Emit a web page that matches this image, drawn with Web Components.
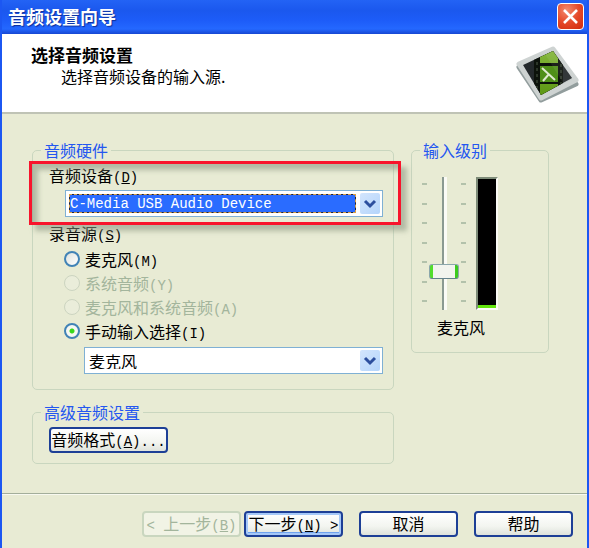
<!DOCTYPE html>
<html lang="zh-CN">
<head>
<meta charset="utf-8">
<title>音频设置向导</title>
<style>
    html {
        background-color: #e8ebd4;
    }

    body {
        margin: 0;
        color: #000;
        font: 16px/16px "Noto Sans CJK SC", sans-serif;
        --line: #c9d6bf;
        --disabled: #a3b59c;
        --caption: #2457f0;
        --mono: "Liberation Mono", "Noto Sans CJK SC", monospace;
    }

    .panels {
        display: grid;
        grid-template-columns: 1fr 138px;
        gap: 17px;
        align-items: start;
        padding: 28px 38px 29px 30px;
    }

    .left {
        display: grid;
        gap: 14px;
    }

    .hardware {
        display: block;
        padding: 9px 10px 15px 16px;
    }

    .format {
        display: block;
        padding: 7px 16px 10px;
    }

    .device {
        position: relative;
    }

    .sources {
        margin-top: 8px;
    }

    .manual {
        margin: 4px 0 0 35px;
    }
</style>
</head>
<body>
<wizard-window caption="音频设置向导">
    <wizard-header slot="header" heading="选择音频设置">选择音频设备的输入源.</wizard-header>
    <div class="panels">
        <div class="left">
            <group-box caption="音频硬件">
                <div class="hardware">
                    <div class="device">
                        <combo-box label="音频设备|(_D)" value="C-Media USB Audio Device" active></combo-box>
                        <red-callout></red-callout>
                    </div>
                    <radio-list class="sources" label="录音源|(_S)"></radio-list>
                    <combo-box class="manual" name="手动输入" value="麦克风"></combo-box>
                </div>
            </group-box>
            <group-box caption="高级音频设置">
                <div class="format">
                    <push-button text="音频格式|(_A)..." size="wide"></push-button>
                </div>
            </group-box>
        </div>
        <group-box caption="输入级别">
            <input-level label="麦克风"></input-level>
        </group-box>
    </div>
    <wizard-footer slot="footer">
        <push-button slot="steps" text="|&lt; |上一步|(_B)" disabled></push-button>
        <push-button slot="steps" text="下一步|(_N) &gt;" default></push-button>
        <push-button text="取消"></push-button>
        <push-button text="帮助"></push-button>
    </wizard-footer>
</wizard-window>

<script>
// parts between "|" alternate between Chinese and monospaced text, "_" marks the access key
function caption(text) {
    return text.split("|").map((part, i) => {
        const safe = part.replace(/</g, "&lt;").replace(/>/g, "&gt;").replace(/_(\w)/, "<u>$1</u>");
        return i % 2 ? `<span class="mono">${safe}</span>` : safe;
    }).join("");
}

const monoStyle = `
    .mono {
        font-family: var(--mono);
        font-size: 14px;
        line-height: 0;
        white-space: pre;
    }
`;

class WizardWindow extends HTMLElement {
    constructor() {
        super();
        this.shadowDOM = this.attachShadow({mode:"open"});
    }

    connectedCallback() {
        this.shadowDOM.innerHTML = `
        <style>
        :host {
            display: block;
            border: solid #1c57f2;
            border-width: 0 2px;
        }

        .title {
            display: flex;
            justify-content: space-between;
            align-items: center;
            height: 34px;
            box-sizing: border-box;
            padding: 0 3px 2px 6px;
            background: linear-gradient(#2363f5, #1b58ee 30%, #1d5cf8 60%, #2468ff 85%, #1747d2);
        }

        h1 {
            margin: 0;
            font-size: 18px;
            line-height: 20px;
            color: white;
            text-shadow: 1px 1px 1px #0c2f9a;
        }

        button {
            width: 27px;
            height: 27px;
            padding: 0;
            border: 1px solid white;
            border-radius: 4px;
            background: radial-gradient(circle at 35% 25%, #f38b70, #e5492a 50%, #cf2a0c);
        }

        svg {
            display: block;
            margin: auto;
        }
        </style>
        <div class="title">
            <h1>${this.getAttribute("caption")}</h1>
            <button type="button" aria-label="关闭">
                <svg width="17" height="17" viewBox="0 0 17 17"><path d="M2 2L15 15M15 2L2 15" stroke="#fff" stroke-width="2.6"/></svg>
            </button>
        </div>
        <slot name="header"></slot>
        <slot></slot>
        <slot name="footer"></slot>`;
    }
}

class WizardHeader extends HTMLElement {
    constructor() {
        super();
        this.shadowDOM = this.attachShadow({mode:"open"});
    }

    connectedCallback() {
        this.shadowDOM.innerHTML = `
        <style>
        :host {
            display: flex;
            justify-content: space-between;
            align-items: flex-start;
            padding: 12px 6px 8px 29px;
            background-color: white;
            border-bottom: 2px solid #bfc3b5;
        }

        h2 {
            margin: 0 0 2px;
            font-size: 17px;
            line-height: 18px;
        }

        p {
            margin: 0 0 0 30px;
            line-height: 20px;
        }
        </style>
        <div>
            <h2>${this.getAttribute("heading")}</h2>
            <p><slot></slot></p>
        </div>
        <svg width="66" height="58" viewBox="0 0 66 58">
            <defs>
                <linearGradient id="rim" x1="0" y1="0" x2="1" y2="1">
                    <stop offset="0" stop-color="#e0e4e3"/>
                    <stop offset=".6" stop-color="#cdd2d1"/>
                    <stop offset="1" stop-color="#b9c0bf"/>
                </linearGradient>
                <linearGradient id="leaf" x1="0" y1="0" x2="0" y2="1">
                    <stop offset="0" stop-color="#86b83c"/>
                    <stop offset="1" stop-color="#5a9612"/>
                </linearGradient>
                <clipPath id="face"><path d="M8 19L38 5L57 32L26 49Z"/></clipPath>
            </defs>
            <path d="M4 21L26 54L61 38" fill="none" stroke="#929d9d" stroke-width="5" stroke-linejoin="round" stroke-linecap="round"/>
            <path d="M4 18L38 3L61 34L26 52Z" fill="url(#rim)" stroke="#ced3d2" stroke-width="5" stroke-linejoin="round"/>
            <g clip-path="url(#face)">
                <path d="M0 0H66V58H0Z" fill="#24292c"/>
                <path d="M19 0H48V58H19Z" fill="#0c120b"/>
                <path d="M25 2H43V17H25ZM25 38H43V52H25Z" fill="url(#leaf)"/>
                <path d="M25 20H43V36H25Z" fill="#4f8f18"/>
                <path d="M21 16h2v3h-2zM21 22h2v3h-2zM21 28h2v3h-2zM21 34h2v3h-2zM21 40h2v3h-2zM45 12h2v3h-2zM45 18h2v3h-2zM45 24h2v3h-2zM45 30h2v3h-2zM45 36h2v3h-2z" fill="#2b3528"/>
                <path d="M27 22L40 34M34 28L28 35" stroke="#dfe9cf" stroke-width="2"/>
                <path d="M38 5L57 32L48 37L30 8Z" fill="#fff" opacity=".07"/>
            </g>
        </svg>`;
    }
}

class GroupBox extends HTMLElement {
    constructor() {
        super();
        this.shadowDOM = this.attachShadow({mode:"open"});
    }

    connectedCallback() {
        this.shadowDOM.innerHTML = `
        <style>
        :host {
            display: block;
        }

        fieldset {
            margin: 0;
            padding: 0;
            min-width: 0;
            border: 1px solid var(--line);
            border-radius: 5px;
        }

        legend {
            margin-left: 8px;
            padding: 0 3px;
            color: var(--caption);
        }
        </style>
        <fieldset>
            <legend>${this.getAttribute("caption")}</legend>
            <slot></slot>
        </fieldset>`;
    }
}

class ComboBox extends HTMLElement {
    constructor() {
        super();
        this.shadowDOM = this.attachShadow({mode:"open"});
    }

    connectedCallback() {
        const label = this.getAttribute("label");
        this.shadowDOM.innerHTML = `
        <style>
        ${monoStyle}
        :host {
            display: block;
        }

        label {
            display: block;
            margin-bottom: 7px;
        }

        .box {
            display: grid;
            grid-template-columns: 1fr 20px;
            gap: 4px;
            box-sizing: border-box;
            height: 27px;
            padding: 2px;
            border: 1px solid #7fb0d4;
            background-color: white;
        }

        label + .box {
            margin-left: 16px;
        }

        select {
            appearance: none;
            min-width: 0;
            margin: 1px 0 1px 1px;
            padding: 0 1px;
            border: 0;
            border-radius: 0;
            outline: 0;
            background: white;
            color: black;
            font: inherit;
        }

        :host([active]) select {
            padding: 0;
            border: 1px dashed #d9a044;
            background:
                linear-gradient(#2a6cff, #2a6cff) padding-box,
                linear-gradient(#16224c, #16224c) border-box;
            color: white;
            font: 14px/16px var(--mono);
        }

        svg {
            display: block;
            border-radius: 2px;
            background: linear-gradient(135deg, #d3e5fd, #b4d5fb);
        }
        </style>
        ${label ? `<label for="list">${caption(label)}</label>` : ""}
        <div class="box">
            <select id="list" ${label ? "" : `aria-label="${this.getAttribute("name")}"`}>
                <option>${this.getAttribute("value")}</option>
            </select>
            <svg width="20" height="21" viewBox="0 0 20 21"><path d="M5 8L10 13L15 8" fill="none" stroke="#2c4f9e" stroke-width="3"/></svg>
        </div>`;
    }
}

// marker drawn round the device row
class RedCallout extends HTMLElement {
    constructor() {
        super();
        this.attachShadow({mode:"open"}).innerHTML = `
        <style>
        :host {
            position: absolute;
            inset: -6px -18px -8px -20px;
            border: 3px solid #f8142c;
            box-shadow: 6px 6px 5px #8d9a8399, inset 6px 6px 5px #8d9a8399;
            pointer-events: none;
        }
        </style>`;
    }
}

class RadioList extends HTMLElement {
    constructor() {
        super();
        this.shadowDOM = this.attachShadow({mode:"open"});
        this.items = [
            {text: "麦克风|(M)"},
            {text: "系统音频|(Y)", state: "disabled"},
            {text: "麦克风和系统音频|(A)", state: "disabled"},
            {text: "手动输入选择|(I)", state: "checked"}
        ];
    }

    connectedCallback() {
        this.shadowDOM.innerHTML = `
        <style>
        ${monoStyle}
        :host {
            display: block;
        }

        .name {
            margin-bottom: 6px;
        }

        .row {
            display: flex;
            align-items: center;
            gap: 5px;
            height: 24px;
            margin-left: 15px;
        }

        .off {
            color: var(--disabled);
        }

        input {
            appearance: none;
            width: 16px;
            height: 16px;
            margin: 0;
            border: 2px solid #4183b6;
            border-radius: 50%;
            background: linear-gradient(135deg, #dfe2dd, #fff);
        }

        input:checked {
            background: radial-gradient(circle, #38d81c 2px, #f6f8f3 3px);
        }

        input:disabled {
            border: 1px solid #ccd4c0;
            background: #eaedda;
        }
        </style>
        <div role="radiogroup" aria-labelledby="name">
            <div class="name" id="name">${caption(this.getAttribute("label"))}</div>
            ${this.items.map((item, i) => `
            <div class="row ${item.state === "disabled" ? "off" : ""}">
                <input type="radio" name="source" id="source${i}" ${item.state || ""}>
                <label for="source${i}">${caption(item.text)}</label>
            </div>`).join("")}
        </div>`;
    }
}

class InputLevel extends HTMLElement {
    constructor() {
        super();
        this.shadowDOM = this.attachShadow({mode:"open"});
    }

    connectedCallback() {
        const ticks = `<div class="ticks">${"<i></i>".repeat(7)}</div>`;
        this.shadowDOM.innerHTML = `
        <style>
        :host {
            display: block;
            padding: 19px 10px 17px;
        }

        .row {
            display: flex;
            height: 133px;
        }

        .ticks {
            display: flex;
            flex-direction: column;
            justify-content: space-between;
            width: 5px;
            padding: 6px 0 8px;
        }

        .ticks i {
            height: 2px;
            background-color: #b3c2ab;
        }

        input {
            appearance: none;
            writing-mode: vertical-lr;
            direction: rtl;
            width: 30px;
            height: 133px;
            margin: 0 2px;
            background: linear-gradient(90deg, #8b9a92 2px, #fbfbf6 2px) center / 5px 100% no-repeat;
        }

        input::-webkit-slider-thumb {
            appearance: none;
            box-sizing: border-box;
            width: 30px;
            height: 15px;
            border: 1px solid #8ba7ab;
            border-bottom-color: #64828c;
            border-radius: 3px;
            background: linear-gradient(90deg, #52dd2c 3px, #f2f4ee 3px, #f2f4ee 25px, #3ccb1c 25px);
        }

        .meter {
            box-sizing: border-box;
            width: 22px;
            margin-left: 10px;
            border: 2px solid #fbfbf6;
            border-top-color: #7d8b78;
            border-left-color: #7d8b78;
            background: linear-gradient(0deg, #62e60c 3px, #000 3px);
        }

        label {
            display: block;
            width: 78px;
            margin-top: 9px;
            text-align: center;
        }
        </style>
        <div class="row">
            ${ticks}
            <input type="range" id="level" min="0" max="100" value="26">
            ${ticks}
            <div class="meter"></div>
        </div>
        <label for="level">${this.getAttribute("label")}</label>`;
    }
}

class PushButton extends HTMLElement {
    constructor() {
        super();
        this.shadowDOM = this.attachShadow({mode:"open"});
    }

    connectedCallback() {
        this.shadowDOM.innerHTML = `
        <style>
        ${monoStyle}
        :host {
            display: block;
            width: 99px;
        }

        :host([size="wide"]) {
            width: 119px;
        }

        button {
            display: block;
            width: 100%;
            height: 26px;
            padding: 0 0 2px;
            border: 2px solid #1d3f96;
            border-radius: 4px;
            background: linear-gradient(#fff, #f3f5f0 60%, #dfe3dc);
            color: black;
            font: inherit;
            white-space: nowrap;
        }

        :host([default]) button {
            box-shadow: inset 0 0 0 2px #a5c8f8, inset 0 -3px 0 #6fa2ee;
        }

        button:disabled {
            border-color: #c9d6bf;
            background: #f1f3e5;
            color: var(--disabled);
        }
        </style>
        <button type="button" ${this.hasAttribute("disabled") ? "disabled" : ""}>${caption(this.getAttribute("text"))}</button>`;
    }
}

class WizardFooter extends HTMLElement {
    constructor() {
        super();
        this.attachShadow({mode:"open"}).innerHTML = `
        <style>
        :host {
            display: flex;
            justify-content: flex-end;
            gap: 16px;
            padding: 17px 14px 11px;
            border-top: 1px solid #a3ae9b;
            box-shadow: inset 0 1px 0 #f8f9f0;
        }

        .steps {
            display: flex;
            gap: 3px;
        }
        </style>
        <div class="steps"><slot name="steps"></slot></div>
        <slot></slot>`;
    }
}

customElements.define("wizard-window", WizardWindow);
customElements.define("wizard-header", WizardHeader);
customElements.define("group-box", GroupBox);
customElements.define("combo-box", ComboBox);
customElements.define("red-callout", RedCallout);
customElements.define("radio-list", RadioList);
customElements.define("input-level", InputLevel);
customElements.define("push-button", PushButton);
customElements.define("wizard-footer", WizardFooter);
</script>
</body>
</html>
